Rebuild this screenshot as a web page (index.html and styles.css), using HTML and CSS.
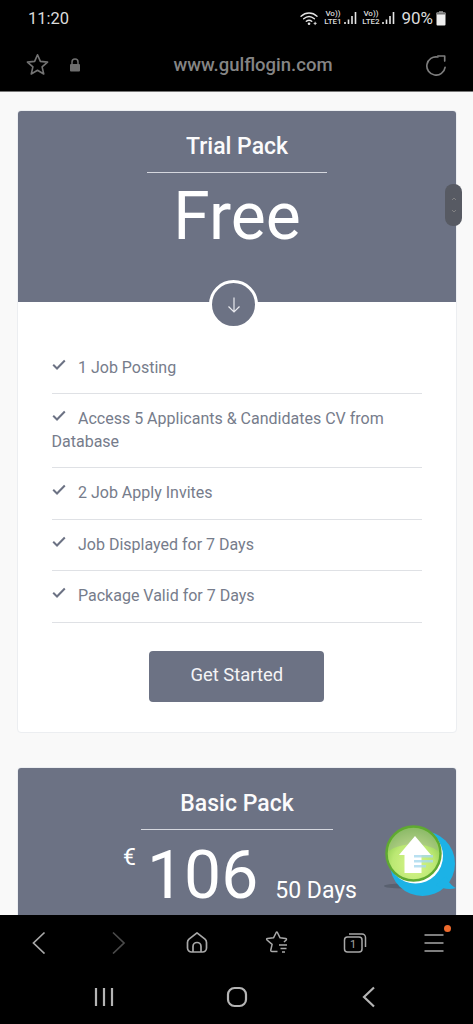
FILE: index.html
```html
<!DOCTYPE html>
<html lang="en">
<head>
<meta charset="utf-8">
<title>Gulflogin pricing</title>
<link rel="stylesheet" href="styles.css">
</head>
<body>
<header class="chrome-top">
  <div class="status">
    <span class="clock">11:20</span>
    <div class="status-right">
      <svg class="wifi" viewBox="0 0 20 16"><path d="M1 5.500C6 1 13 1 18 5.500M3.800 8.300C7.300 5.200 11.700 5.200 15.200 8.300M6.600 11C8.400 9.500 10.600 9.500 12.400 11" fill="none" stroke="#e4e4e4" stroke-width="1.500" stroke-linecap="round"/><circle cx="9.500" cy="13.600" r="1.400" fill="#e4e4e4"/><path d="M16 11.500v3.500M14.400 13.200h3.200" stroke="#e4e4e4" stroke-width="1"/></svg>
      <span class="sim"><span>Vo))</span><span>LTE1</span></span>
      <svg class="signal" viewBox="0 0 13 14"><path d="M1 11v2M4.500 8.500v4.500M8 5v8M11.500 1v12" stroke="#e4e4e4" stroke-width="1.600" fill="none"/></svg>
      <span class="sim"><span>Vo))</span><span>LTE2</span></span>
      <svg class="signal" viewBox="0 0 13 14"><path d="M1 11v2M4.500 8.500v4.500M8 5v8M11.500 1v12" stroke="#e4e4e4" stroke-width="1.600" fill="none"/></svg>
      <span class="percent">90%</span>
      <svg class="battery" viewBox="0 0 10 15"><rect x="3" y="0" width="4" height="2" fill="#777"/><rect x="0.500" y="1.500" width="9" height="13" rx="1" fill="#eee"/><rect x="0.500" y="1.500" width="9" height="2" fill="#777"/></svg>
    </div>
  </div>
  <div class="urlbar">
    <div class="url-left">
      <svg class="star" viewBox="0 0 24 24"><path d="M12 1.800l3 7 7.500.7-5.700 5 1.700 7.400L12 18l-6.500 3.900 1.700-7.400-5.700-5 7.500-.7z" fill="none" stroke="#737373" stroke-width="1.700" stroke-linejoin="round"/></svg>
      <svg class="lock" viewBox="0 0 12 14"><path d="M3 6V4a3 3 0 0 1 6 0v2" fill="none" stroke="#6e6e6e" stroke-width="1.500"/><rect x="1" y="6" width="10" height="7.500" rx="1" fill="#6e6e6e"/></svg>
    </div>
    <span class="url">www.gulflogin.com</span>
    <svg class="reload" viewBox="0 0 24 24"><path d="M14 3.300A10 10 0 1 0 21.900 14.500" fill="none" stroke="#7d7d7d" stroke-width="1.800" stroke-linecap="round"/><path d="M14 2.200h7.500v5.500" fill="none" stroke="#7d7d7d" stroke-width="1.800" stroke-linecap="round" stroke-linejoin="round"/></svg>
  </div>
</header>

<main class="page">
  <section class="card">
    <div class="card-head">
      <h3 class="pack-title">Trial Pack</h3>
      <div class="price-free">Free</div>
      <span class="down-badge">
        <svg viewBox="0 0 18 18"><path d="M9 1.500v14.500M3.500 10.500L9 16l5.500-5.500" fill="none" stroke="#e8e9ee" stroke-width="1.200"/></svg>
      </span>
    </div>
    <div class="card-body">
      <ul class="features">
        <li><svg class="tick" viewBox="0 0 14 11"><path d="M1.200 5.800l3.800 3.700 7.800-8" fill="none" stroke="#6c7284" stroke-width="2"/></svg>1 Job Posting</li>
        <li><svg class="tick" viewBox="0 0 14 11"><path d="M1.200 5.800l3.800 3.700 7.800-8" fill="none" stroke="#6c7284" stroke-width="2"/></svg>Access 5 Applicants &amp; Candidates CV from Database</li>
        <li><svg class="tick" viewBox="0 0 14 11"><path d="M1.200 5.800l3.800 3.700 7.800-8" fill="none" stroke="#6c7284" stroke-width="2"/></svg>2 Job Apply Invites</li>
        <li><svg class="tick" viewBox="0 0 14 11"><path d="M1.200 5.800l3.800 3.700 7.800-8" fill="none" stroke="#6c7284" stroke-width="2"/></svg>Job Displayed for 7 Days</li>
        <li><svg class="tick" viewBox="0 0 14 11"><path d="M1.200 5.800l3.800 3.700 7.800-8" fill="none" stroke="#6c7284" stroke-width="2"/></svg>Package Valid for 7 Days</li>
      </ul>
      <a class="cta">Get Started</a>
    </div>
  </section>

  <section class="card">
    <div class="card-head">
      <h3 class="pack-title">Basic Pack</h3>
      <div class="price-row">
        <span class="currency">€</span>
        <span class="amount">106</span>
        <span class="days">50 Days</span>
      </div>
    </div>
  </section>

  <div class="scroll-thumb">
    <svg viewBox="0 0 6 20"><path d="M1 5l2-2 2 2M1 15l2 2 2-2" fill="none" stroke="#8a8a8a" stroke-width="0.800"/></svg>
  </div>

  <svg class="float-top" viewBox="0 0 74 74">
    <defs>
      <radialGradient id="glass" cx="50%" cy="70%" r="65%">
        <stop offset="0" stop-color="#d9f58c"/>
        <stop offset="0.6" stop-color="#bbe873"/>
        <stop offset="1" stop-color="#86c84a"/>
      </radialGradient>
    </defs>
    <ellipse cx="18" cy="62" rx="18" ry="2.500" fill="#4c5560" opacity="0.6"/>
    <circle cx="38.500" cy="39.500" r="32.500" fill="#1cb2e6"/>
    <path d="M62 52c2 6 6 10 10 12-6 2-14 1-20-3z" fill="#1cb2e6"/>
    <circle cx="31.500" cy="32" r="27.500" fill="#fff"/>
    <circle cx="29.500" cy="29.500" r="27" fill="url(#glass)" stroke="#5fa932" stroke-width="2.500"/>
    <path d="M5 27a24.500 23 0 0 1 49 0c-11-9-38-9-49 0z" fill="#9aa79a" opacity="0.4"/>
    <path d="M31 12L47 31h-9.500v18h-17V31H15z" fill="#fff"/>
    <path d="M30 31h19v2.500H30zM30 36h19v2.500H30zM30 41h12v2.500H30z" fill="#a8d8ee" opacity="0.8"/>
  </svg>
</main>

<footer class="chrome-bottom">
  <nav class="toolbar">
    <svg viewBox="0 0 24 24"><path d="M17.500 2.500L6.500 13l11 10.500" fill="none" stroke="#a8a8a8" stroke-width="1.700"/></svg>
    <svg viewBox="0 0 24 24"><path d="M7 2.500L18 13 7 23.500" fill="none" stroke="#4a4a4a" stroke-width="1.700"/></svg>
    <svg viewBox="0 0 24 24"><path d="M2.500 12.500Q2.500 10.500 4 9.200L12 2.800l8 6.400q1.500 1.300 1.500 3.300v5.500a4 4 0 0 1-4 4h-11a4 4 0 0 1-4-4zM8 22v-5.500a4 4 0 0 1 8 0V22" fill="none" stroke="#a8a8a8" stroke-width="1.700" stroke-linejoin="round"/></svg>
    <svg viewBox="0 0 24 24"><path d="M13.500 21.500H8q-1.500 0-1.200-1.500l1.300-5.600L3 10q-1-1.200.5-1.500l6-.7 2.700-5.300q.6-1 1.200 0l2.700 5.300 5.500.7q1.400.3.600 1.500L20 12M15 15h8M16.500 18.500h6M18 22h3" fill="none" stroke="#a8a8a8" stroke-width="1.500" stroke-linejoin="round"/></svg>
    <span class="tabs">
      <svg viewBox="0 0 24 24"><rect x="1.500" y="7" width="17.500" height="15" rx="3" fill="none" stroke="#a8a8a8" stroke-width="1.500"/><path d="M6 4h13a3.500 3.500 0 0 1 3.500 3.500V17" fill="none" stroke="#a8a8a8" stroke-width="1.500"/></svg>
      <span class="tab-count">1</span>
    </span>
    <span class="menu">
      <svg viewBox="0 0 24 24"><path d="M2.500 5h19M2.500 13h19M2.500 21h19" fill="none" stroke="#a8a8a8" stroke-width="1.500"/></svg>
      <i class="menu-dot"></i>
    </span>
  </nav>
  <nav class="sysnav">
    <svg viewBox="0 0 24 24"><path d="M4 3v18M12 3v18M20 3v18" fill="none" stroke="#b4b4b4" stroke-width="2.200"/></svg>
    <svg viewBox="0 0 24 24"><rect x="3" y="3" width="18" height="18" rx="6.500" fill="none" stroke="#b4b4b4" stroke-width="2.200"/></svg>
    <svg viewBox="0 0 24 24"><path d="M17 2.500L7 12l10 9.500" fill="none" stroke="#b4b4b4" stroke-width="2.200"/></svg>
  </nav>
</footer>
</body>
</html>
```
FILE: styles.css
```css
* { box-sizing: border-box; }
html, body { margin: 0; height: 100%; }
body {
  height: 1024px;
  overflow: hidden;
  display: flex;
  flex-direction: column;
  font-family: Roboto, "Liberation Sans", sans-serif;
  background: #000;
}
.chrome-top { flex: none; height: 92px; background: #000; border-bottom: 1px solid #777; }
.status { height: 36px; display: flex; justify-content: space-between; align-items: center; padding: 0 27px 0 28px; color: #dcdcdc; }
.clock { font-size: 16.500px; }
.status-right { display: flex; align-items: center; }
.wifi { width: 19px; height: 15px; margin-right: 5px; }
.sim { display: flex; flex-direction: column; align-items: center; width: 17px; font-size: 8px; line-height: 8px; color: #dcdcdc; font-weight: 500; margin-right: 3px; }
.signal { width: 13px; height: 14px; margin-right: 5px; }
.percent { font-size: 17px; margin: 0 3px 0 1px; }
.battery { width: 10px; height: 15px; }
.urlbar { height: 55px; display: flex; align-items: center; padding: 2px 26px 0; }
.url-left { flex: none; display: flex; align-items: center; gap: 20px; }
.star { width: 23px; height: 23px; display: block; }
.lock { width: 12px; height: 14px; display: block; }
.url { flex: 1; text-align: center; font-size: 18.500px; font-weight: 500; line-height: 22px; color: #858585; }
.reload { flex: none; width: 22px; height: 22px; display: block; }

.page { flex: 1; min-height: 0; overflow: hidden; position: relative; background: #f9f9f9; padding: 18px 16px 0 17px; }
.card { background: #fff; border: 1px solid #eceef1; border-radius: 4px; margin-bottom: 34.500px; }
.card-head { position: relative; background: #6c7284; border-radius: 3px 3px 0 0; text-align: center; color: #fff; }
.pack-title { display: inline-block; margin: 0; padding: 23px 39px 11.500px; border-bottom: 1px solid #d5d7de; font-size: 23px; line-height: 26px; font-weight: 500; color: #fbfbfc; }
.price-free { height: 129.500px; font-size: 66px; line-height: 87px; }
.down-badge { position: absolute; left: 50%; bottom: -27px; margin-left: -28px; width: 49px; height: 49px; border-radius: 50%; background: #6c7284; border: 3px solid #fff; display: flex; align-items: center; justify-content: center; }
.down-badge svg { width: 18px; height: 18px; }
.card-body { padding: 40.500px 34px 30px 33.500px; text-align: center; }
.features { list-style: none; margin: 0 0 28px; padding: 0; text-align: left; font-size: 16px; line-height: 22.500px; color: #767c8b; }
.features li { padding: 14px 0; border-bottom: 1px solid #dfe1e5; }
.tick { width: 14px; height: 11px; margin-right: 12.500px; position: relative; top: -3px; }
.cta { display: inline-block; width: 175px; height: 51px; border-radius: 4px; background: #6c7284; color: #f4f4f6; font-size: 18.400px; line-height: 47px; text-align: center; }
.price-row { display: flex; justify-content: center; align-items: baseline; height: 90px; padding: 4px 0 0 6px; }
.currency { font-size: 23px; align-self: flex-start; margin: 10px 11px 0 0; }
.amount { font-size: 66px; line-height: 84px; margin-right: 17px; }
.days { font-size: 23px; }

.scroll-thumb { position: absolute; left: 445px; top: 92px; width: 17px; height: 42px; border-radius: 8px; background: #575a63; display: flex; align-items: center; justify-content: center; }
.scroll-thumb svg { width: 6px; height: 20px; }
.float-top { position: absolute; left: 384px; top: 732px; width: 74px; height: 74px; }

.chrome-bottom { flex: none; height: 109px; background: #000; }
.toolbar { height: 54px; display: grid; grid-template-columns: repeat(6, 1fr); justify-items: center; align-items: center; }
.toolbar svg { width: 24px; height: 24px; display: block; }
.tabs, .menu { position: relative; display: block; width: 24px; height: 24px; }
.tab-count { position: absolute; left: 1.500px; top: 7px; width: 17.500px; text-align: center; font-size: 11px; line-height: 15px; color: #a8a8a8; }
.menu-dot { position: absolute; right: -5px; top: -5px; width: 7px; height: 7px; border-radius: 50%; background: #ee6a2c; }
.sysnav { height: 55px; display: grid; grid-template-columns: repeat(3, 132.500px); justify-content: center; justify-items: center; align-items: center; }
.sysnav svg { width: 24px; height: 24px; display: block; }
```
